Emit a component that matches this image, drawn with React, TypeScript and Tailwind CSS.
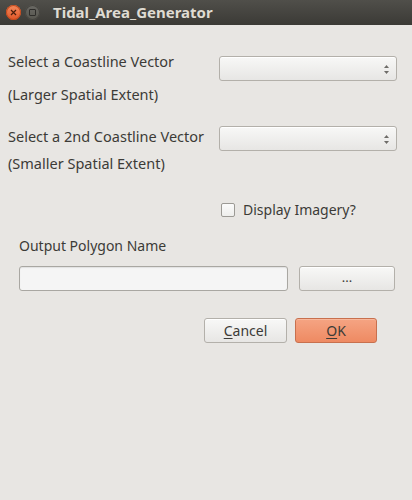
import React from "react";

const font = { fontFamily: '"Noto Sans", "Open Sans", sans-serif' };

function Combo() {
  return (
    <div className="relative h-[25px] w-[178px] rounded-[3px] border border-[#b3b0aa] bg-gradient-to-b from-[#f8f8f7] to-[#e7e6e4] shadow-[inset_0_1px_0_#ffffff]">
      <svg className="absolute right-[6px] top-[7px]" width="7" height="11" viewBox="0 0 7 11">
        <path d="M3.5 1 L6 4 L1 4 Z" fill="#6e6c68" />
        <path d="M3.5 10 L6 7 L1 7 Z" fill="#6e6c68" />
      </svg>
    </div>
  );
}

export default function App() {
  return (
    <div className="h-[500px] w-[412px] bg-[#e8e6e3] text-[#3c3b37] text-[14px]" style={font}>
      <div className="flex h-[25px] items-center bg-gradient-to-b from-[#504f4a] to-[#3b3a36]">
        <div className="ml-[6px] flex h-[15px] w-[15px] shrink-0 items-center justify-center rounded-full bg-gradient-to-b from-[#f48a5c] to-[#df5424] shadow-[inset_0_0_0_1px_#c24a1e]">
          <svg width="7" height="7" viewBox="0 0 7 7">
            <path d="M1 1 L6 6 M6 1 L1 6" stroke="#4a1e0c" strokeWidth="1.2" />
          </svg>
        </div>
        <div className="ml-[4px] flex h-[15px] w-[15px] shrink-0 items-center justify-center rounded-full bg-gradient-to-b from-[#6a6964] to-[#57564f] shadow-[inset_0_0_0_1px_#45443f]">
          <div className="h-[7px] w-[7px] rounded-[1px] border border-[#2e2d2a]" />
        </div>
        <div className="ml-[13px] shrink-0 text-[15px] font-bold text-[#dfdbd2]">Tidal_Area_Generator</div>
      </div>

      <div className="pt-[26px]">
        <div className="flex pr-[15px]">
          <div className="pl-[8px] text-[14.5px]">
            <div className="h-[20px] leading-[20px]">Select a Coastline Vector</div>
            <div className="mt-[13px] h-[20px] leading-[20px]">(Larger Spatial Extent)</div>
          </div>
          <div className="ml-auto mt-[5px]">
            <Combo />
          </div>
        </div>

        <div className="mt-[22px] flex pr-[15px]">
          <div className="pl-[8px] text-[14.5px]">
            <div className="h-[20px] leading-[20px]">Select a 2nd Coastline Vector</div>
            <div className="mt-[7px] h-[20px] leading-[20px]">(Smaller Spatial Extent)</div>
          </div>
          <div className="ml-auto">
            <Combo />
          </div>
        </div>

        <div className="mt-[27px] flex h-[20px] items-center pl-[221px]">
          <div className="h-[14px] w-[14px] shrink-0 rounded-[2px] border border-[#9c9a95] bg-gradient-to-b from-[#fbfbfb] to-[#eeeeec]" />
          <div className="ml-[8px] leading-[20px]">Display Imagery?</div>
        </div>

        <div className="mt-[16px] h-[20px] pl-[19px] leading-[20px]">Output Polygon Name</div>

        <div className="mt-[10px] flex pl-[19px]">
          <div className="h-[25px] w-[269px] rounded-[3px] border border-[#a9a7a2] bg-[#f5f5f5] shadow-[inset_0_1px_1px_rgba(0,0,0,0.08)]" />
          <div className="ml-[11px] flex h-[25px] w-[96px] items-center justify-center rounded-[3px] border border-[#b3b0aa] bg-gradient-to-b from-[#f8f8f7] to-[#e7e6e4] pb-[2px] text-[13px] shadow-[inset_0_1px_0_#ffffff]">
            ...
          </div>
        </div>

        <div className="mt-[27px] flex pl-[204px]">
          <div className="flex h-[25px] w-[83px] items-center justify-center rounded-[3px] border border-[#b3b0aa] bg-gradient-to-b from-[#f8f8f7] to-[#e7e6e4] shadow-[inset_0_1px_0_#ffffff]">
            <span><span className="underline underline-offset-2">C</span>ancel</span>
          </div>
          <div className="ml-[8px] flex h-[25px] w-[82px] items-center justify-center rounded-[3px] border border-[#c8704e] bg-gradient-to-b from-[#f5a483] to-[#ee8a62] shadow-[inset_0_1px_0_#f8b89c]">
            <span><span className="underline underline-offset-2">O</span>K</span>
          </div>
        </div>
      </div>
    </div>
  );
}
